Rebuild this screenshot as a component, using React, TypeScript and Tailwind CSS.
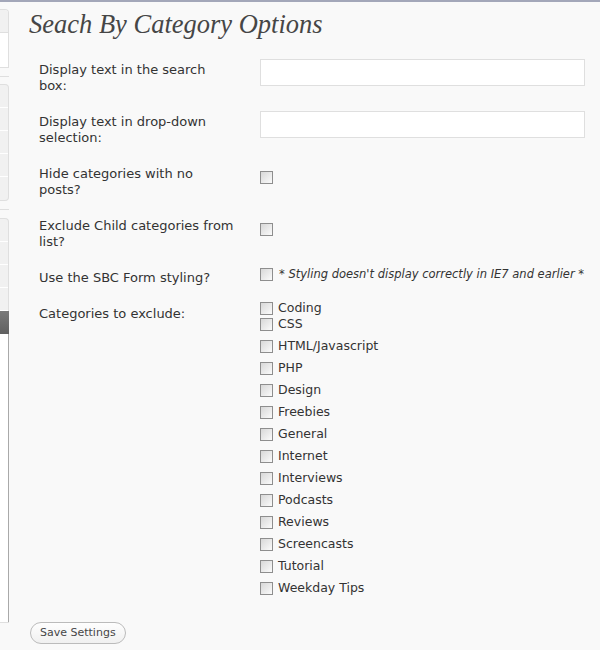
const categories = [
  'Coding',
  'CSS',
  'HTML/Javascript',
  'PHP',
  'Design',
  'Freebies',
  'General',
  'Internet',
  'Interviews',
  'Podcasts',
  'Reviews',
  'Screencasts',
  'Tutorial',
  'Weekday Tips',
]

function Box() {
  return (
    <span className="inline-block w-[13px] h-[13px] shrink-0 border border-[#8e8e8e] bg-gradient-to-br from-[#d8d8d8] to-[#fbfbfb]" />
  )
}

function Sidebar() {
  return (
    <div className="w-[9px] shrink-0 flex flex-col">
      <div className="mt-[7px] h-[59px] rounded-tr-[4px] border-t border-r border-b border-[#dfdfdf] overflow-hidden">
        <div className="h-[23px] bg-[#f1f1f1] border-b border-[#dfdfdf]" />
        <div className="h-[35px] bg-white" />
      </div>
      <div className="mt-[8px] h-px bg-[#dfdfdf]" />
      <div className="mt-[7px] rounded-r-[4px] border-t border-r border-b border-[#dfdfdf] overflow-hidden bg-[#f1f1f1]">
        {[0, 1, 2, 3, 4].map(i => (
          <div key={i} className="h-[23px] border-b border-white last:border-b-0" />
        ))}
      </div>
      <div className="mt-[8px] h-px bg-[#dfdfdf]" />
      <div className="mt-[8px] rounded-tr-[4px] border-t border-r border-[#dfdfdf] overflow-hidden bg-[#f1f1f1]">
        {[0, 1, 2, 3].map(i => (
          <div key={i} className="h-[23px] border-b border-white" />
        ))}
      </div>
      <div className="h-[23px] bg-gradient-to-b from-[#7a7a7a] to-[#606060]" />
      <div className="h-[288px] bg-white border-r border-[#a9a9a9]" />
      <div className="h-px bg-[#dfdfdf]" />
    </div>
  )
}

function Row({ label, children }: { label: string[]; children: React.ReactNode }) {
  return (
    <div className="flex">
      <div className="w-[200px] ml-[30px] py-[10px] leading-[16px] text-[13px] whitespace-nowrap">
        {label.map(l => (
          <div key={l}>{l}</div>
        ))}
      </div>
      <div className="ml-[21px] flex-1 pr-[15px]">{children}</div>
    </div>
  )
}

export default function App() {
  return (
    <div className="w-[600px] h-[650px] bg-[#f9f9f9] flex flex-col overflow-hidden">
      <div className="h-[2px] bg-[#a3a7b9]" />
      <div className="flex flex-1">
        <Sidebar />
        <div
          className="flex-1 text-[#333] text-[12.5px]"
          style={{ fontFamily: 'Verdana, "DejaVu Sans", sans-serif' }}
        >
          <h2
            className="pl-[20px] pt-[7px] text-[26.5px] italic text-[#464646] leading-[30px]"
            style={{ fontFamily: 'Georgia, "Liberation Serif", serif' }}
          >
            Seach By Category Options
          </h2>

          <div className="mt-[13px]">
            <Row label={['Display text in the search', 'box:']}>
              <div className="mt-[7px] h-[27px] w-[325px] bg-white border border-[#dfdfdf]" />
            </Row>
            <Row label={['Display text in drop-down', 'selection:']}>
              <div className="mt-[7px] h-[27px] w-[325px] bg-white border border-[#dfdfdf]" />
            </Row>
            <Row label={['Hide categories with no', 'posts?']}>
              <div className="mt-[15px]"><Box /></div>
            </Row>
            <Row label={['Exclude Child categories from', 'list?']}>
              <div className="mt-[15px]"><Box /></div>
            </Row>
            <Row label={['Use the SBC Form styling?']}>
              <div className="mt-[6px] flex items-center gap-[6px]">
                <Box />
                <span className="italic text-[11.5px]">* Styling doesn't display correctly in IE7 and earlier *</span>
              </div>
            </Row>
            <Row label={['Categories to exclude:']}>
              <div className="mt-[4px] flex flex-col">
                {categories.map((c, i) => (
                  <div
                    key={c}
                    className={'flex items-center gap-[5px] h-[16px] ' + (i > 1 ? 'mt-[6px]' : '')}
                  >
                    <Box />
                    <span>{c}</span>
                  </div>
                ))}
              </div>
            </Row>
          </div>

          <div className="mt-[26px] pl-[21px]">
            <button className="h-[22px] px-[9px] rounded-full border border-[#bbb] bg-gradient-to-b from-[#fefefe] to-[#f0f0f0] text-[11px] text-[#464646] leading-[20px]">
              Save Settings
            </button>
          </div>
        </div>
      </div>
    </div>
  )
}
